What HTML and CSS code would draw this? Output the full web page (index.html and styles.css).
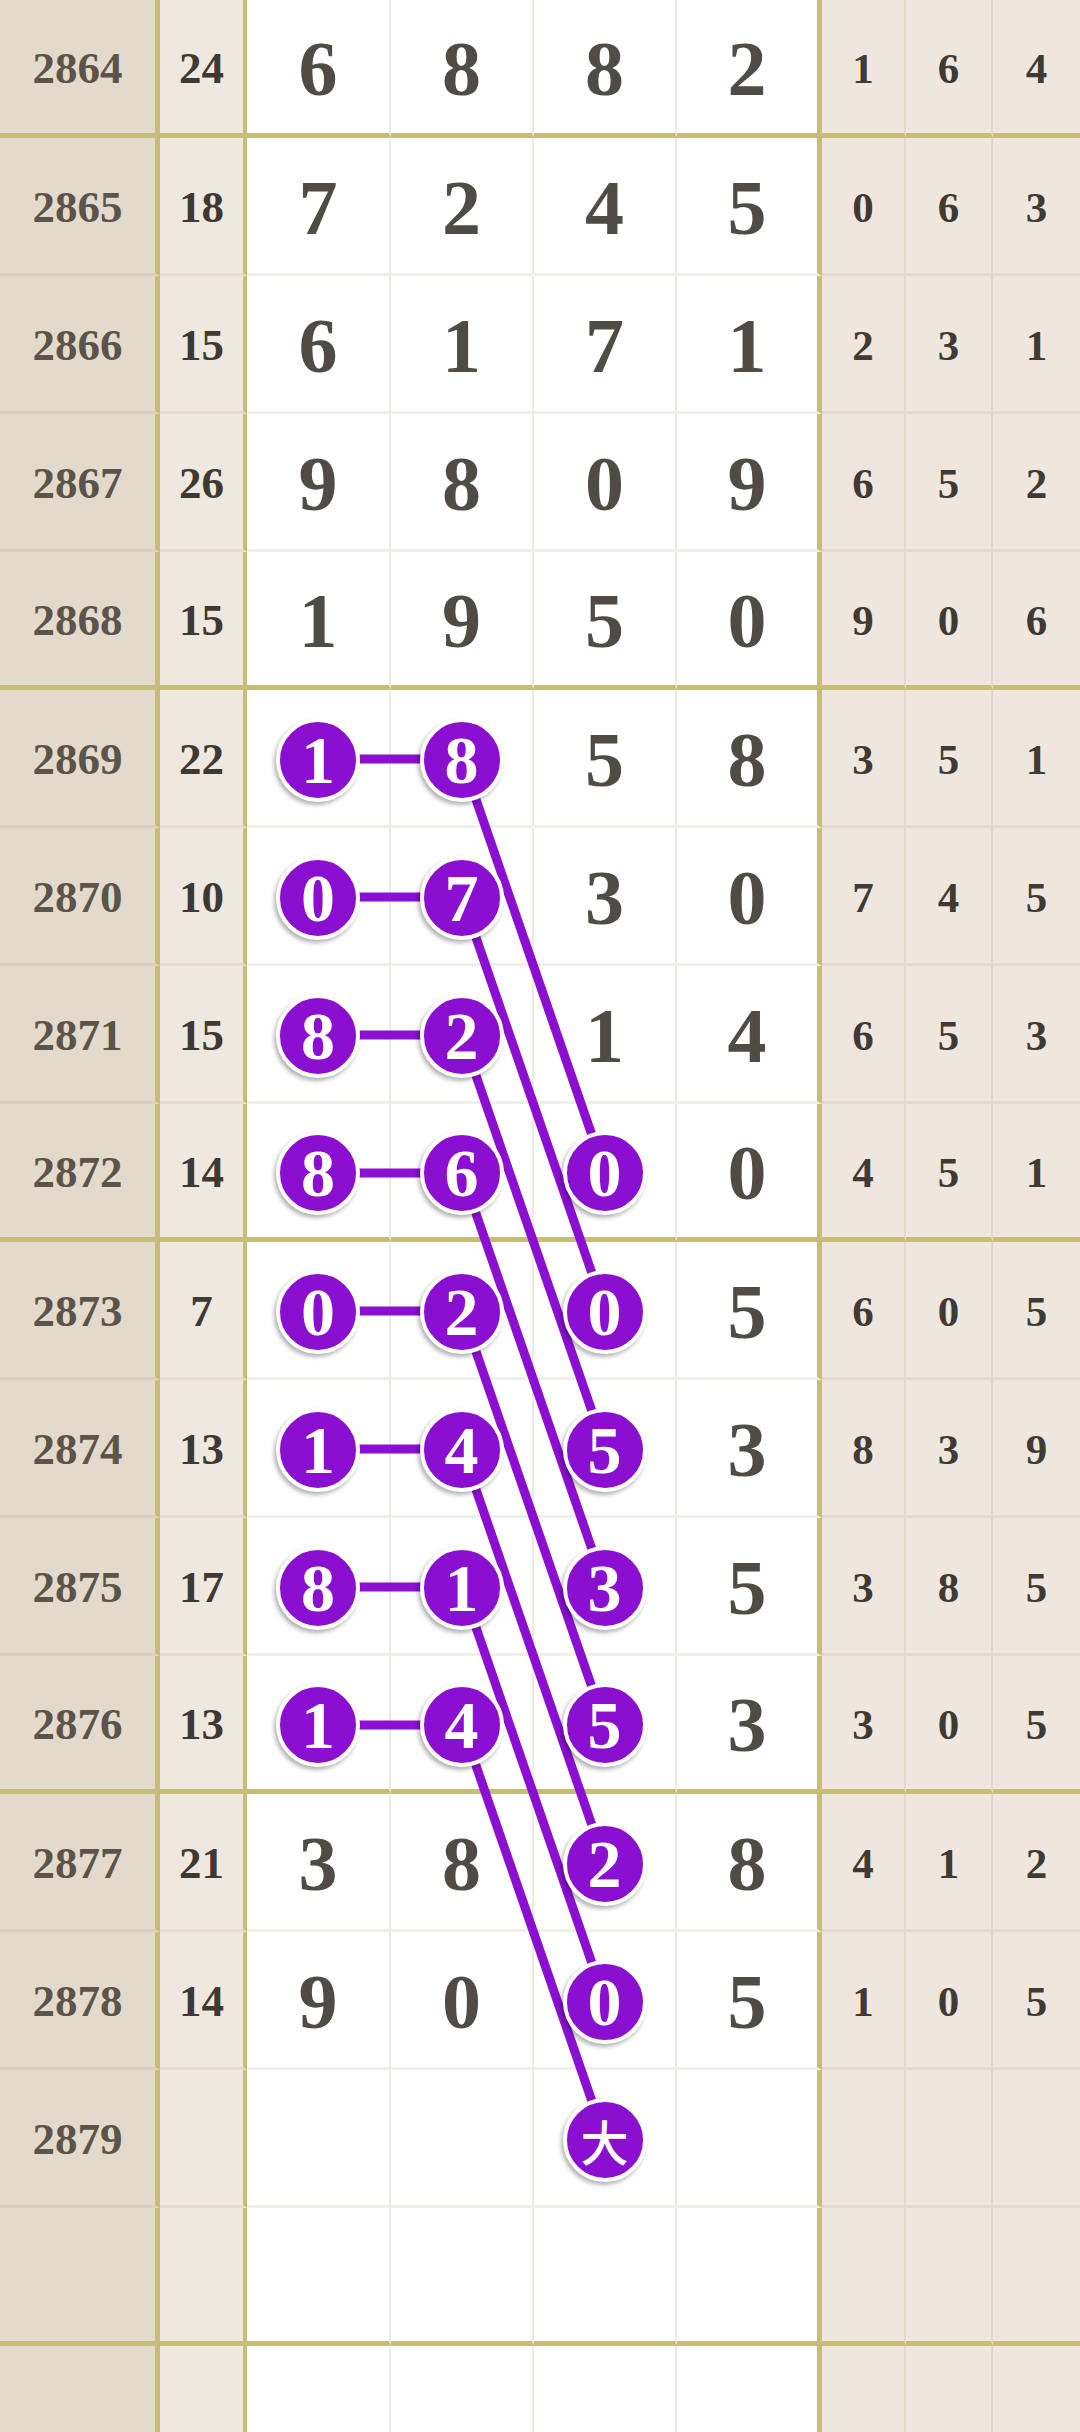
FILE: index.html
```html
<!DOCTYPE html>
<html lang="zh-CN">
<head>
    <meta charset="UTF-8">
    <meta name="viewport" content="width=device-width, initial-scale=1.0">
    <title>走势图</title>
    <link rel="stylesheet" href="styles.css">
</head>
<body>

    <div class="chart">
        <div class="row end">
            <div class="qh">2864</div><div class="sum">24</div>
            <div class="d">6</div><div class="d">8</div><div class="d">8</div><div class="d">2</div>
            <div class="s">1</div><div class="s">6</div><div class="s">4</div>
        </div>
        <div class="row">
            <div class="qh">2865</div><div class="sum">18</div>
            <div class="d">7</div><div class="d">2</div><div class="d">4</div><div class="d">5</div>
            <div class="s">0</div><div class="s">6</div><div class="s">3</div>
        </div>
        <div class="row">
            <div class="qh">2866</div><div class="sum">15</div>
            <div class="d">6</div><div class="d">1</div><div class="d">7</div><div class="d">1</div>
            <div class="s">2</div><div class="s">3</div><div class="s">1</div>
        </div>
        <div class="row">
            <div class="qh">2867</div><div class="sum">26</div>
            <div class="d">9</div><div class="d">8</div><div class="d">0</div><div class="d">9</div>
            <div class="s">6</div><div class="s">5</div><div class="s">2</div>
        </div>
        <div class="row end">
            <div class="qh">2868</div><div class="sum">15</div>
            <div class="d">1</div><div class="d">9</div><div class="d">5</div><div class="d">0</div>
            <div class="s">9</div><div class="s">0</div><div class="s">6</div>
        </div>
        <div class="row">
            <div class="qh">2869</div><div class="sum">22</div>
            <div class="d"><span class="ball">1</span></div><div class="d"><span class="ball">8</span></div><div class="d">5</div><div class="d">8</div>
            <div class="s">3</div><div class="s">5</div><div class="s">1</div>
        </div>
        <div class="row">
            <div class="qh">2870</div><div class="sum">10</div>
            <div class="d"><span class="ball">0</span></div><div class="d"><span class="ball">7</span></div><div class="d">3</div><div class="d">0</div>
            <div class="s">7</div><div class="s">4</div><div class="s">5</div>
        </div>
        <div class="row">
            <div class="qh">2871</div><div class="sum">15</div>
            <div class="d"><span class="ball">8</span></div><div class="d"><span class="ball">2</span></div><div class="d">1</div><div class="d">4</div>
            <div class="s">6</div><div class="s">5</div><div class="s">3</div>
        </div>
        <div class="row end">
            <div class="qh">2872</div><div class="sum">14</div>
            <div class="d"><span class="ball">8</span></div><div class="d"><span class="ball">6</span></div><div class="d"><span class="ball">0</span></div><div class="d">0</div>
            <div class="s">4</div><div class="s">5</div><div class="s">1</div>
        </div>
        <div class="row">
            <div class="qh">2873</div><div class="sum">7</div>
            <div class="d"><span class="ball">0</span></div><div class="d"><span class="ball">2</span></div><div class="d"><span class="ball">0</span></div><div class="d">5</div>
            <div class="s">6</div><div class="s">0</div><div class="s">5</div>
        </div>
        <div class="row">
            <div class="qh">2874</div><div class="sum">13</div>
            <div class="d"><span class="ball">1</span></div><div class="d"><span class="ball">4</span></div><div class="d"><span class="ball">5</span></div><div class="d">3</div>
            <div class="s">8</div><div class="s">3</div><div class="s">9</div>
        </div>
        <div class="row">
            <div class="qh">2875</div><div class="sum">17</div>
            <div class="d"><span class="ball">8</span></div><div class="d"><span class="ball">1</span></div><div class="d"><span class="ball">3</span></div><div class="d">5</div>
            <div class="s">3</div><div class="s">8</div><div class="s">5</div>
        </div>
        <div class="row end">
            <div class="qh">2876</div><div class="sum">13</div>
            <div class="d"><span class="ball">1</span></div><div class="d"><span class="ball">4</span></div><div class="d"><span class="ball">5</span></div><div class="d">3</div>
            <div class="s">3</div><div class="s">0</div><div class="s">5</div>
        </div>
        <div class="row">
            <div class="qh">2877</div><div class="sum">21</div>
            <div class="d">3</div><div class="d">8</div><div class="d"><span class="ball">2</span></div><div class="d">8</div>
            <div class="s">4</div><div class="s">1</div><div class="s">2</div>
        </div>
        <div class="row">
            <div class="qh">2878</div><div class="sum">14</div>
            <div class="d">9</div><div class="d">0</div><div class="d"><span class="ball">0</span></div><div class="d">5</div>
            <div class="s">1</div><div class="s">0</div><div class="s">5</div>
        </div>
        <div class="row">
            <div class="qh">2879</div><div class="sum"></div>
            <div class="d"></div><div class="d"></div><div class="d"><span class="ball big">大</span></div><div class="d"></div>
            <div class="s"></div><div class="s"></div><div class="s"></div>
        </div>
        <div class="row end">
            <div class="qh"></div><div class="sum"></div>
            <div class="d"></div><div class="d"></div><div class="d"></div><div class="d"></div>
            <div class="s"></div><div class="s"></div><div class="s"></div>
        </div>
        <div class="row">
            <div class="qh"></div><div class="sum"></div>
            <div class="d"></div><div class="d"></div><div class="d"></div><div class="d"></div>
            <div class="s"></div><div class="s"></div><div class="s"></div>
        </div>

        <!-- connecting lines, drawn under the balls -->
        <svg class="lines" width="1080" height="2432" viewBox="0 0 1080 2432">
            <g stroke="#8b0fd1" stroke-width="9">
                <line x1="318" y1="759" x2="462" y2="759"/>
                <line x1="318" y1="897" x2="462" y2="897"/>
                <line x1="318" y1="1035" x2="462" y2="1035"/>
                <line x1="318" y1="1173" x2="462" y2="1173"/>
                <line x1="318" y1="1311" x2="462" y2="1311"/>
                <line x1="318" y1="1449" x2="462" y2="1449"/>
                <line x1="318" y1="1587" x2="462" y2="1587"/>
                <line x1="318" y1="1725" x2="462" y2="1725"/>

                <line x1="462" y1="759" x2="605" y2="1173"/>
                <line x1="462" y1="897" x2="605" y2="1311"/>
                <line x1="462" y1="1035" x2="605" y2="1449"/>
                <line x1="462" y1="1173" x2="605" y2="1587"/>
                <line x1="462" y1="1311" x2="605" y2="1725"/>
                <line x1="462" y1="1449" x2="605" y2="1863"/>
                <line x1="462" y1="1587" x2="605" y2="2001"/>
                <line x1="462" y1="1725" x2="605" y2="2139"/>
            </g>
        </svg>
    </div>

</body>
</html>
```

FILE: styles.css
```css
html, body {
    margin: 0;
    padding: 0;
    overflow: hidden;
}

body {
    background-color: #fff;
    font-family: "Liberation Serif", "Times New Roman", serif;
    font-weight: bold;
}

.chart {
    position: relative;
    width: 1080px;
}

.row {
    display: grid;
    grid-template-columns: 160px 87px 144px 143px 143px 145px 84px 87px 87px;
    height: 138px;
}

.row > div {
    box-sizing: border-box;
    display: flex;
    justify-content: center;
    align-items: center;
    padding-top: 4px;
    border-bottom: 3px solid rgba(150, 130, 90, 0.13);
    line-height: 1;
}

.row.end > div {
    border-bottom: 5px solid #c8bc7a;
}

.qh {
    background-color: #e4dacb;
    border-right: 5px solid #c8bc7a;
    color: #5b544a;
    font-size: 45px;
}

.sum {
    background-color: #efe8df;
    border-right: 4px solid #c8bc7a;
    color: #3e3932;
    font-size: 45px;
}

.d {
    background-color: #fff;
    border-right: 2px solid #edeae1;
    color: #4f4c45;
    font-size: 78px;
}

.row .d:nth-child(6) {
    border-right: 5px solid #c8bc7a;
}

.s {
    background-color: #efe7de;
    border-right: 2px solid #e2d9cc;
    color: #3f3a33;
    font-size: 43px;
}

.s:last-child {
    border-right: none;
}

.ball {
    position: relative;
    z-index: 2;
    width: 76px;
    height: 76px;
    border: 4px solid #fff;
    border-radius: 50%;
    background-color: #8b0fd1;
    color: #fff;
    font-size: 68px;
    display: flex;
    justify-content: center;
    align-items: center;
    box-shadow: -2px 3px 4px rgba(0, 0, 0, 0.3);
}

.ball.big {
    font-family: "Noto Sans CJK SC", sans-serif;
    font-weight: 500;
    font-size: 48px;
}

.lines {
    position: absolute;
    top: 0;
    left: 0;
    z-index: 1;
}
```
